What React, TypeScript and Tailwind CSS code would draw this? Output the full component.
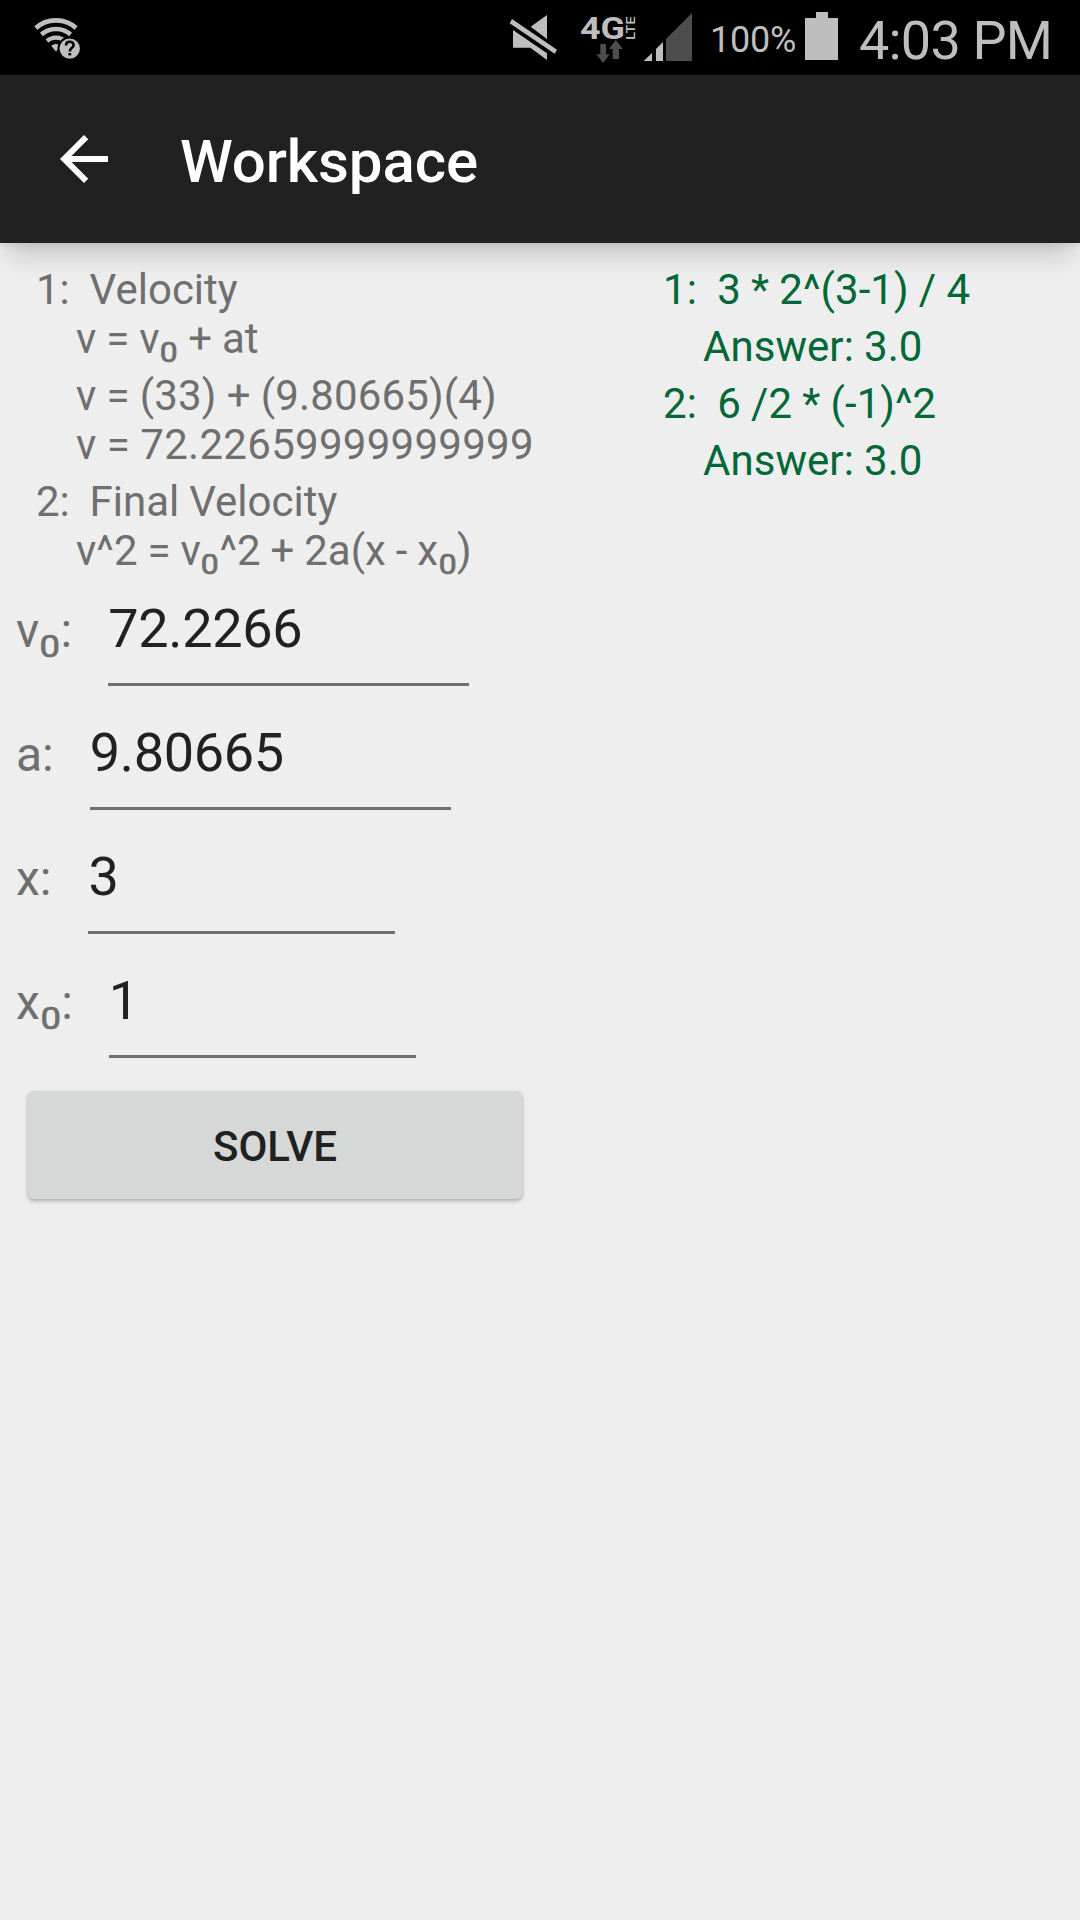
import React from "react"

interface Field {
  name: string
  initial?: boolean
  value: string
  width: string
}

const fields: Field[] = [
  { name: "v", initial: true, value: "72.2266", width: "w-[361px]" },
  { name: "a", value: "9.80665", width: "w-[361px]" },
  { name: "x", value: "3", width: "ml-px w-[307px]" },
  { name: "x", initial: true, value: "1", width: "w-[307px]" },
]

function Sub({ children }: { children: React.ReactNode }) {
  return (
    <span className="inline-flex h-0 w-[0.445em] items-baseline justify-center">
      <span className="relative top-[0.32em] inline-block scale-x-[1.17] text-[0.65em] leading-none tracking-normal [-webkit-text-stroke:0.7px]">
        {children}
      </span>
    </span>
  )
}

function WifiIcon() {
  return (
    <svg className="ml-[33px] h-[75px] w-12 shrink-0" viewBox="33 0 48 75">
      <defs>
        <clipPath id="fan">
          <path d="M56 51.5 L26 16.5 L26 0 L86 0 L86 16.5 Z" />
        </clipPath>
      </defs>
      <g clipPath="url(#fan)" fill="none" stroke="#bebebe">
        <circle cx="56" cy="51" r="30.7" strokeWidth="4.8" />
        <circle cx="56" cy="51" r="22" strokeWidth="4.6" />
        <circle cx="56" cy="51" r="13.4" strokeWidth="4.4" />
        <circle cx="56" cy="51" r="3.5" strokeWidth="7" />
      </g>
      <circle cx="69.7" cy="48.6" r="12.2" fill="#000" />
      <circle cx="69.7" cy="48.6" r="10.2" fill="#bebebe" />
      <path d="M66 45.6 C66 40.4 73.6 40.6 73.6 45.2 C73.6 48 69.8 47.8 69.8 51.6" fill="none" stroke="#000" strokeWidth="2.6" />
      <rect x="68.4" y="53" width="2.8" height="2.4" fill="#000" />
    </svg>
  )
}

function StatusIcons() {
  return (
    <svg className="h-[75px] w-[200px] shrink-0" viewBox="0 0 600 225">
      <g fill="#bebebe">
        <path d="M36 57 L171 149 L164 161 L29 70 Z" />
        <path d="M92 80 L141 45 V117 Z" />
        <path d="M39 90 L141 160 V180 L91 143 H39 Z" />
      </g>
      <text x="240" y="117" fontSize="93" fontWeight="700" textLength="135" lengthAdjust="spacingAndGlyphs" fill="#bebebe">4G</text>
      <text transform="translate(405 119) rotate(-90)" fontSize="38" fontWeight="500" textLength="70" lengthAdjust="spacingAndGlyphs" fill="#bebebe">LTE</text>
      <g fill="#4d4d4d">
        <path d="M301 132 H318 V163 H329 L309.5 189 L289 163 H301 Z" />
        <path d="M347 120 L369 147 H357 V177 H338 V147 H327 Z" />
        <path d="M498 117 L576 39 V183 H498 Z" />
      </g>
      <g fill="#bebebe">
        <path d="M431 183 L456 159 V183 Z" />
        <path d="M468 147 L489 126 V183 H468 Z" />
      </g>
    </svg>
  )
}

function StatusBar() {
  return (
    <div className="flex h-[75px] items-start bg-black text-[#bebebe]">
      <WifiIcon />
      <div className="w-[419px]" />
      <StatusIcons />
      <span className="ml-[10px] mt-[19px] w-[95px] text-[36px] leading-[42px] tracking-[-0.2px]">100%</span>
      <svg className="mt-3 h-12 w-[33px] shrink-0" viewBox="0 0 33 48" fill="#bebebe">
        <path d="M11 0 H23 V6 H33 V48 H0 V6 H11 Z" />
      </svg>
      <span className="ml-[21px] mt-[9px] whitespace-nowrap text-[54px] leading-[63px] tracking-[-0.8px]">4:03 PM</span>
    </div>
  )
}

function AppBar() {
  return (
    <div className="relative z-10 flex h-[168px] items-start bg-[#212121] text-white shadow-[0_4px_6px_rgba(0,0,0,0.06),0_21px_24px_-8px_rgba(0,0,0,0.16)]">
      <svg className="ml-12 mt-12 size-[72px]" viewBox="0 0 24 24" fill="currentColor">
        <path d="M20 11H7.83l5.59-5.59L12 4l-8 8 8 8 1.41-1.41L7.83 13H20v-2z" />
      </svg>
      <h1 className="ml-[60px] mt-[52px] text-[60px] font-medium leading-[70px] tracking-[-0.1px]">Workspace</h1>
    </div>
  )
}

function Equations() {
  return (
    <div className="h-[310px] whitespace-pre pl-9 pt-[22px] leading-[49px] text-[#6f6f6f] [word-spacing:-0.5px]">
      <div>1:  Velocity</div>
      <div className="pl-10 pb-2">v = v<Sub>0</Sub> + at</div>
      <div className="pl-10 tracking-[0.15px]">v = (33) + (9.80665)(4)</div>
      <div className="pl-10 pb-2 tracking-[0.28px]">v = 72.22659999999999</div>
      <div>2:  Final Velocity</div>
      <div className="pl-10">v^2 = v<Sub>0</Sub>^2 + 2a(x - x<Sub>0</Sub>)</div>
    </div>
  )
}

function FieldRow({ name, initial, value, width }: Field) {
  return (
    <div className="flex h-[124px] items-start pl-4">
      <label className="mr-9 mt-[50px] text-[48px] leading-[56px] text-[#6f6f6f]">
        {name}
        {initial && <Sub>0</Sub>}:
      </label>
      <div className={`mt-11 h-[89px] border-b-[3px] border-[#6f6f6f] text-[54px] leading-[63px] tracking-[-0.33px] text-[#212121] ${width}`}>
        {value}
      </div>
    </div>
  )
}

function Results() {
  return (
    <div className="whitespace-pre pt-[18px] leading-[57px] tracking-[0.05px] text-[#006837] [word-spacing:-0.3px]">
      <div>1:  3 * 2^(3-1) / 4</div>
      <div className="pl-10">Answer: 3.0</div>
      <div>2:  6 /2 * (-1)^2</div>
      <div className="pl-10">Answer: 3.0</div>
    </div>
  )
}

export default function App() {
  return (
    <div className="h-[1920px] w-[1080px] overflow-hidden bg-[#eeeeee] font-[Roboto,sans-serif] text-[42px]">
      <StatusBar />
      <AppBar />
      <div className="flex">
        <div className="w-[663px]">
          <Equations />
          {fields.map((field) => (
            <FieldRow key={field.value} {...field} />
          ))}
          <button className="ml-[28px] mt-[42px] block h-[108px] w-[494px] rounded-[6px] bg-[#d6d8d7] pt-0.5 text-[42px] font-medium text-[#212121] shadow-[0_2px_4px_rgba(0,0,0,0.3)]">
            SOLVE
          </button>
        </div>
        <Results />
      </div>
    </div>
  )
}
